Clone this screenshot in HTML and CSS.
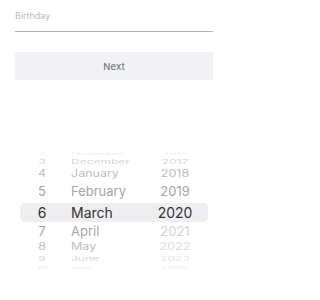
FILE: index.html
```html
<!DOCTYPE html>
<html>
<head>
<meta charset="utf-8">
<meta name="viewport" content="width=226">
<link rel="stylesheet" href="styles.css">
</head>
<body>
<div class="page">
<div class="form">
  <div class="field"><span class="label">Birthday</span></div>
  <div class="button">Next</div>
</div>
<div class="picker">
  <div class="row r4 h5"><span class="num">2</span><span class="month">November</span><span class="year">2016</span></div>
  <div class="row r3 h12"><span class="num">3</span><span class="month">December</span><span class="year">2017</span></div>
  <div class="row r2 h11"><span class="num">4</span><span class="month">January</span><span class="year">2018</span></div>
  <div class="row r1 h24"><span class="num">5</span><span class="month">February</span><span class="year">2019</span></div>
  <div class="row r0 h19"><span class="num">6</span><span class="month">March</span><span class="year">2020</span></div>
  <div class="row r1 h18"><span class="num">7</span><span class="month">April</span><span class="year fade">2021</span></div>
  <div class="row r2 h13"><span class="num">8</span><span class="month">May</span><span class="year fade">2022</span></div>
  <div class="row r3 h12"><span class="num">9</span><span class="month">June</span><span class="year fade">2023</span></div>
  <div class="row r4 h6"><span class="num">10</span><span class="month">July</span><span class="year fade">2024</span></div>
</div>
</div>
</body>
</html>
```
FILE: styles.css
```css
html, body {
  margin: 0;
  padding: 0;
  background: #ffffff;
}
body {
  font-family: Inter, "Liberation Sans", sans-serif;
}
.page {
  width: 226px;
  height: 300px;
  overflow: hidden;
}
.form {
  padding: 0 13px 0 15px;
}
.field {
  padding-top: 10px;
  height: 21px;
  border-bottom: 1px solid #b3b3b3;
}
.label {
  display: block;
  font-size: 9px;
  line-height: 12px;
  color: #bdbdbd;
}
.button {
  margin-top: 20px;
  height: 28px;
  background: #f2f2f4;
  display: flex;
  align-items: center;
  justify-content: center;
  font-size: 9.5px;
  font-weight: 500;
  color: #7a7a7a;
}
.picker {
  margin: 71px 18px 0 20px;
}
.row {
  display: grid;
  grid-template-columns: 44px 1fr 60px;
  padding-right: 3px;
  overflow: hidden;
}
.row span {
  display: block;
  white-space: nowrap;
}
.num { text-align: center; }
.month { padding-left: 7px; }
.year { text-align: center; }
.h5 { height: 5px; line-height: 5px; }
.h6 { height: 6px; line-height: 6px; }
.h11 { height: 11px; line-height: 11px; }
.h12 { height: 12px; line-height: 12px; }
.h13 { height: 13px; line-height: 13px; }
.h18 { height: 18px; line-height: 18px; }
.h19 { height: 19px; line-height: 19px; }
.h24 { height: 24px; line-height: 24px; }
.r0 {
  font-size: 14px;
  color: #333336;
  background: #eeeef0;
  border-radius: 5px;
}
.r1 { font-size: 13px; color: #a5a5a5; }
.r2 { font-size: 12.5px; color: #bdbdbd; }
.r2 span { transform: scaleY(0.8); }
.r3 { font-size: 12px; color: #d6d6d6; }
.r3 span { transform: scaleY(0.5); }
.r4 { font-size: 11px; color: #ededed; }
.r4 span { transform: scaleY(0.3); }
.r1 .fade { color: #d4d4d4; }
.r2 .fade { color: #dcdcdc; }
.r3 .fade { color: #e6e6e6; }
```
